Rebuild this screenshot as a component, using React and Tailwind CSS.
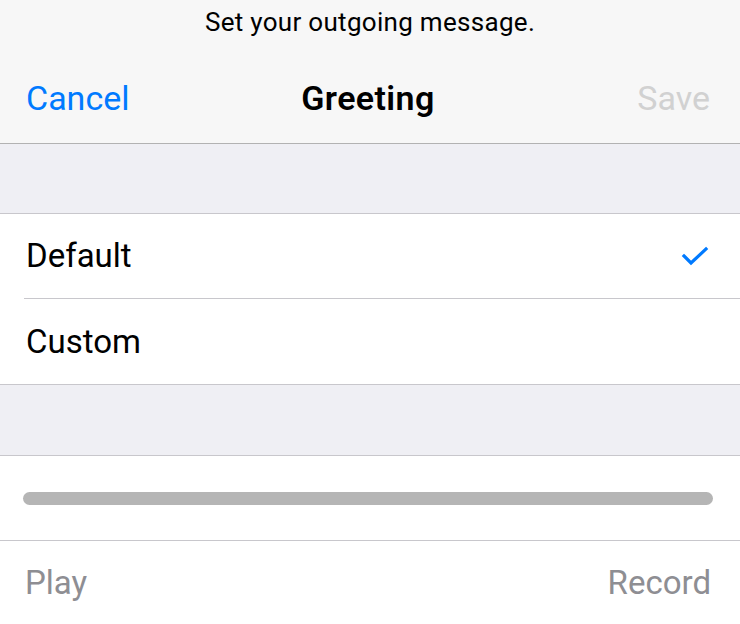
import React from 'react';

const font = { fontFamily: 'Roboto, "Liberation Sans", sans-serif' };

const Checkmark = () => (
  <svg width="28" height="20" viewBox="0 0 28 20" fill="none">
    <path d="M3 10 L10 17 L25 3" stroke="#007aff" strokeWidth="3.2" strokeLinecap="square" />
  </svg>
);

export default function App() {
  return (
    <div className="w-[740px] h-[624px] bg-white overflow-hidden text-black" style={font}>
      {/* Header */}
      <div className="h-[144px] bg-[#f7f7f7] border-b border-[#b2b2b2] flex flex-col">
        <p className="text-center text-[26px] leading-none pt-[9px] tracking-[0.3px]">Set your outgoing message.</p>
        <div className="grid grid-cols-3 items-center pl-[26px] pr-[30px] mt-[46px] text-[34px] leading-none">
          <span className="text-[#007aff]">Cancel</span>
          <span className="text-center font-semibold tracking-[0.4px]">Greeting</span>
          <span className="text-right text-[#d1d1d1]">Save</span>
        </div>
      </div>

      {/* Spacer */}
      <div className="h-[70px] bg-[#efeff4] border-b border-[#c8c7cc]" />

      {/* Options */}
      <div className="pl-[24px]">
        <div className="h-[85px] flex items-center justify-between pr-[31px] border-b border-[#c8c7cc]">
          <span className="text-[33px] pl-[2px]">Default</span>
          <Checkmark />
        </div>
      </div>
      <div className="h-[86px] flex items-center px-[26px] border-b border-[#c8c7cc]">
        <span className="text-[33px]">Custom</span>
      </div>

      {/* Spacer */}
      <div className="h-[71px] bg-[#efeff4] border-b border-[#c8c7cc]" />

      {/* Progress */}
      <div className="h-[85px] flex items-center pl-[23px] pr-[27px] border-b border-[#c8c7cc]">
        <div className="w-full h-[13px] rounded-full bg-[#b5b5b5]" />
      </div>

      {/* Controls */}
      <div className="h-[84px] flex items-center justify-between pl-[25px] pr-[29px] text-[#8e8e93]">
        <span className="text-[33px]">Play</span>
        <span className="text-[33px]">Record</span>
      </div>
    </div>
  );
}
